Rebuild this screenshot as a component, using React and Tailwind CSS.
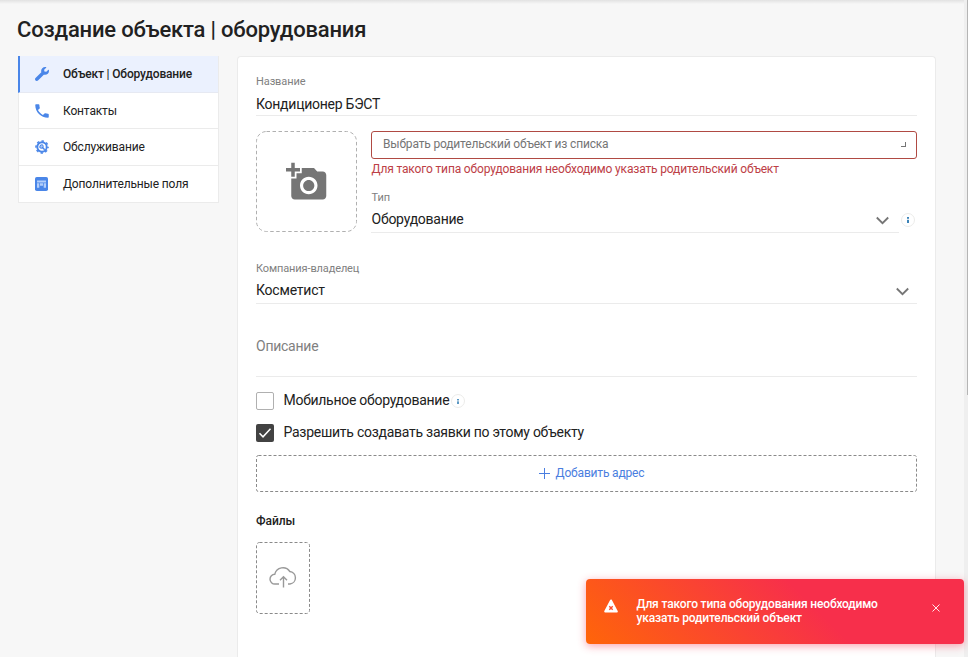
import React from "react";
import { MdAddAPhoto, MdPhone } from "react-icons/md";

function WrenchIcon() {
  return (
    <svg viewBox="0 0 512 512" className="h-[14px] w-[14px]" fill="#4a86e8">
      <path d="M507.7 109.100c-2.200-9-13.500-12.100-20.100-5.500l-74.400 74.400-67.900-11.300L334 98.900l74.400-74.400c6.600-6.600 3.400-17.900-5.700-20.200-47.400-11.700-99.600.9-136.600 37.900-39.600 39.600-50.500 97.100-34.100 147.200L18.700 402.800c-25 25-25 65.500 0 90.500 25 25 65.500 25 90.500 0l213.200-213.200c50.100 16.700 107.500 5.700 147.400-34.200 37.100-37.100 49.700-89.300 37.900-136.800z" />
    </svg>
  );
}

function GearIcon() {
  return (
    <svg viewBox="0 0 14 14" className="h-[14px] w-[14px]" fill="none" stroke="#4a86e8">
      <circle cx="7" cy="7" r="4.700" strokeWidth="1.900" />
      <circle cx="7" cy="7" r="6" strokeWidth="1.600" strokeDasharray="2.400 2.312" strokeDashoffset="1.200" />
      <path d="M7 7l2.700 2.700" strokeWidth="1.500" />
      <path d="M5 5l1.500 1.500M4.700 6.300a1.700 1.700 0 1 0 1.600-1.600" strokeWidth="1.200" />
    </svg>
  );
}

function FieldsIcon() {
  return (
    <svg viewBox="0 0 14 14" className="h-[14px] w-[14px]">
      <rect x="0" y="0" width="13" height="14" rx="1.800" fill="#4a86e8" />
      <path d="M2 3.500h9v2H2zM2 6.200h2.300v4.600H2zM5 6.200h3v2.600H5zM8.700 6.200H11v4.600H8.700z" fill="#b4cffa" />
    </svg>
  );
}

function Chevron() {
  return (
    <svg viewBox="0 0 14 9" className="h-[9px] w-[14px]" fill="none" stroke="#757575" strokeWidth="1.800">
      <path d="M1.800 1.500L7.500 7.200l5.700-5.700" />
    </svg>
  );
}

function Info({ small }) {
  return (
    <span className="flex h-[14px] w-[14px] shrink-0 items-center justify-center rounded-full border border-[#ececea] bg-white">
      <svg viewBox="0 0 2 6" className={small ? "h-[5px] w-[2px]" : "h-[6px] w-[2px]"} fill="#3d84b8">
        <rect width="2" height="1.800" />
        <rect y="2.800" width="2" height="3.200" />
      </svg>
    </span>
  );
}

const items = [
  { label: "Контакты", icon: <MdPhone className="h-[18px] w-[18px] text-[#4a86e8]" />, style: "h-[36px] border-b" },
  { label: "Обслуживание", icon: <GearIcon />, style: "h-[37px] border-b" },
  { label: "Дополнительные поля", icon: <FieldsIcon />, style: "h-[36px]" },
];

export default function App() {
  return (
    <div className="relative h-[657px] w-[968px] overflow-hidden bg-[#f7f7f7] font-['Roboto',sans-serif] text-[#212121]">
      <div className="flex h-full">
        <div className="flex min-w-0 flex-1 flex-col">
          <div className="h-[4px] shrink-0 bg-gradient-to-b from-[#e2e2e2] to-[#f7f7f7]" />
          <h1 className="h-[52px] shrink-0 pt-[11px] pl-[17px] text-[22px] leading-[30px] font-medium tracking-[-0.2px] whitespace-nowrap">
            Создание объекта | оборудования
          </h1>
          <div className="flex min-h-0 flex-1 pl-[18px]">
            <nav className="h-[147px] w-[201px] shrink-0 border-r border-b border-[#ebebeb] bg-white text-[12px]">
              <div className="flex h-[37px] items-center border-b border-l-2 border-b-[#e6e9f2] border-l-[#4a86e8] bg-[#ebf1fe]">
                <span className="flex w-[43px] pl-[15px]"><WrenchIcon /></span>
                <span className="font-medium tracking-[-0.16px]">Объект | Оборудование</span>
              </div>
              {items.map((it) => (
                <div key={it.label} className={`flex items-center border-l border-[#ebebeb] ${it.style}`}>
                  <span className="flex w-[44px] items-center">
                    <span className="flex w-[45px] shrink-0 justify-center">{it.icon}</span>
                  </span>
                  <span className="tracking-[-0.15px]">{it.label}</span>
                </div>
              ))}
            </nav>
            <main className="ml-[18px] w-[699px] shrink-0 rounded-t-[4px] border border-b-0 border-[#ebebeb] bg-white px-[18px]">
              <div className="h-[59px] border-b border-[#ebebeb] pt-[18px]">
                <div className="text-[11px] leading-[14px] tracking-[-0.1px] text-[#808080]">Название</div>
                <div className="mt-[6px] text-[14px] leading-[18px] tracking-[-0.25px]">Кондиционер БЭСТ</div>
              </div>
              <div className="mt-[15px] flex">
                <div className="relative flex h-[101px] w-[101px] shrink-0 items-center justify-center pl-px text-[#757575]">
                  <svg className="absolute inset-0 h-[101px] w-[101px]" fill="none" stroke="#b0b0b0">
                    <rect x="0.500" y="0.500" width="100" height="100" rx="10" strokeDasharray="3.500 2.500" />
                  </svg>
                  <MdAddAPhoto className="mr-px h-[42px] w-[42px]" />
                </div>
                <div className="ml-[14px] min-w-0 flex-1">
                  <div className="flex h-[28px] items-center justify-between rounded-[3px] border border-[#b04a43] pr-[10px] pl-[11px]">
                    <span className="pb-[3px] text-[12px] tracking-[-0.17px] text-[#757575]">Выбрать родительский объект из списка</span>
                    <span className="mb-[2px] h-[5px] w-[5px] border-r border-b border-[#757575]" />
                  </div>
                  <div className="mt-[2px] h-[16px] pl-[0.5px] text-[12px] leading-[16px] tracking-[-0.16px] whitespace-nowrap text-[#bd4046]">
                    Для такого типа оборудования необходимо указать родительский объект
                  </div>
                  <div className="mt-[14px] pl-[0.5px] text-[11px] leading-[14px] tracking-[-0.1px] text-[#808080]">Тип</div>
                  <div className="flex">
                    <div className="flex h-[28px] w-[528px] items-center justify-between border-b border-[#ebebeb] pr-[10px]">
                      <span className="pt-[1px] pl-[0.5px] text-[14px] tracking-[-0.25px]">Оборудование</span>
                      <span className="pt-[4px]"><Chevron /></span>
                    </div>
                    <span className="mt-[8px] ml-[2px]"><Info /></span>
                  </div>
                </div>
              </div>
              <div className="mt-[29px] h-[42px] border-b border-[#ebebeb]">
                <div className="text-[11px] leading-[14px] tracking-[-0.12px] text-[#808080]">Компания-владелец</div>
                <div className="mt-[5px] flex items-center justify-between pr-[8px] text-[14px] leading-[18px] tracking-[-0.22px]">
                  Косметист
                  <span className="pt-[3px]"><Chevron /></span>
                </div>
              </div>
              <div className="h-[73px] border-b border-[#ebebeb] pt-[33px] text-[14px] leading-[18px] tracking-[-0.25px] text-[#808080]">Описание</div>
              <div className="mt-[14px] flex h-[20px] items-center text-[14px] tracking-[-0.28px]">
                <span className="h-[18px] w-[18px] rounded-[2px] border border-[#b0b0b0]" />
                <span className="ml-[9.5px] pb-[2px]">Мобильное оборудование</span>
                <span className="ml-[1.5px]"><Info small /></span>
              </div>
              <div className="mt-[12px] flex h-[20px] items-center text-[14px] tracking-[-0.26px]">
                <svg viewBox="0 0 18 18" className="h-[18px] w-[18px]">
                  <rect width="18" height="18" rx="2" fill="#424242" />
                  <path d="M3.500 9.300l3.500 3.500 7.500-8" fill="none" stroke="#fff" strokeWidth="1.500" />
                </svg>
                <span className="ml-[9.5px] pb-[2px]">Разрешить создавать заявки по этому объекту</span>
              </div>
              <div className="relative mt-[12px] flex h-[37px] items-center justify-center pl-[9px] text-[12px] text-[#4a7ee0]">
                <svg className="absolute inset-0 h-[37px] w-[661px]" fill="none" stroke="#8a8a8a">
                  <rect x="0.500" y="0.500" width="660" height="36" rx="2" strokeDasharray="3 2" />
                </svg>
                <svg viewBox="0 0 12 12" className="mr-[6px] mb-[1px] h-[12px] w-[12px]" fill="none" stroke="#4a7ee0">
                  <path d="M6.500 1v11M1 6.500h11" />
                </svg>
                <span className="pb-[2px] tracking-[-0.17px]">Добавить адрес</span>
              </div>
              <div className="mt-[21px] text-[12px] leading-[16px] font-medium tracking-[-0.05px]">Файлы</div>
              <div className="relative mt-[13px] flex h-[72px] w-[54px] items-center justify-center pb-[2px]">
                <svg className="absolute inset-0 h-[72px] w-[54px]" fill="none" stroke="#8a8a8a">
                  <rect x="0.500" y="0.500" width="53" height="71" rx="3" strokeDasharray="3 2" />
                </svg>
                <svg viewBox="0 0 28 24" className="h-[24px] w-[28px]" fill="none" stroke="#999" strokeWidth="1.400">
                  <path d="M10 19H6a4.900 4.900 0 0 1-.2-9.800A8.300 8.300 0 0 1 20.800 6.500a6.300 6.300 0 0 1 .2 12.500H19" />
                  <path d="M14.500 22.500V12M11 15.200L14.500 11.700l3.500 3.500" />
                </svg>
              </div>
            </main>
          </div>
        </div>
        <div className="w-[4px] shrink-0 bg-[#efefef]">
          <div className="ml-[3px] h-[395px] w-px bg-[#b5b5b5]" />
        </div>
      </div>
      <div className="absolute top-[579px] left-[586px] flex h-[65px] w-[378px] rounded-[4px] bg-[linear-gradient(45deg,#ff6509_0%,#f72f4b_60%)] text-white shadow-[0_2px_8px_rgba(247,47,75,0.450)]">
        <svg viewBox="0 0 14 14" className="mt-[20px] ml-[18px] h-[14px] w-[14px]">
          <path d="M7 1.500L12.800 12.500H1.200z" fill="#fff" stroke="#fff" strokeWidth="2" strokeLinejoin="round" />
          <path d="M5.300 7.300l3.400 3.400M8.700 7.300l-3.400 3.400" stroke="#fb4b2c" strokeWidth="1.400" />
        </svg>
        <div className="mt-[18px] ml-[18.5px] w-[260px] text-[12px] leading-[14px] font-medium tracking-[-0.16px]">
          Для такого типа оборудования необходимо <br />
          указать родительский объект
        </div>
        <svg viewBox="0 0 8 8" className="mt-[25px] ml-[35px] h-[8px] w-[8px]" stroke="#fff" strokeWidth="0.900">
          <path d="M0.500 0.500l7 7M7.500 0.500l-7 7" />
        </svg>
      </div>
    </div>
  );
}
